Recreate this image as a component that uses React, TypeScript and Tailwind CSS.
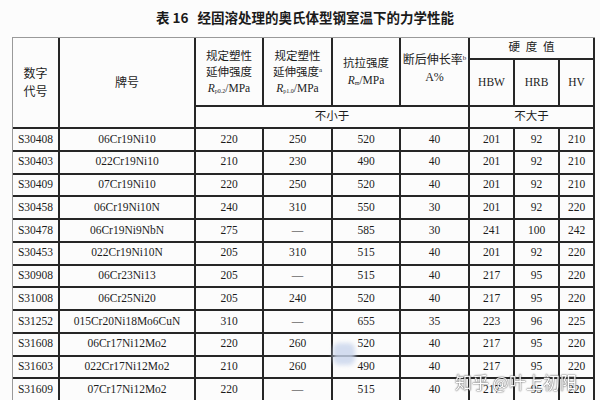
import React from "react";

const rows: string[][] = [
  ["S30408", "06Cr19Ni10", "220", "250", "520", "40", "201", "92", "210"],
  ["S30403", "022Cr19Ni10", "210", "230", "490", "40", "201", "92", "210"],
  ["S30409", "07Cr19Ni10", "220", "250", "520", "40", "201", "92", "210"],
  ["S30458", "06Cr19Ni10N", "240", "310", "550", "30", "201", "92", "220"],
  ["S30478", "06Cr19Ni9NbN", "275", "—", "585", "30", "241", "100", "242"],
  ["S30453", "022Cr19Ni10N", "205", "310", "515", "40", "201", "92", "220"],
  ["S30908", "06Cr23Ni13", "205", "—", "515", "40", "217", "95", "220"],
  ["S31008", "06Cr25Ni20", "205", "240", "520", "40", "217", "95", "220"],
  ["S31252", "015Cr20Ni18Mo6CuN", "310", "—", "655", "35", "223", "96", "225"],
  ["S31608", "06Cr17Ni12Mo2", "220", "260", "520", "40", "217", "95", "220"],
  ["S31603", "022Cr17Ni12Mo2", "210", "260", "490", "40", "217", "95", "220"],
  ["S31609", "07Cr17Ni12Mo2", "220", "—", "515", "40", "217", "95", "220"],
];

const cell =
  "flex items-center justify-center text-center border-r-2 border-b-2 border-[#262626]";

export default function App() {
  return (
    <div className="relative w-[600px] h-[400px] overflow-hidden bg-[#fcfcfc] text-[#1c1c1c] font-['Liberation_Serif','Noto_Sans_CJK_SC',serif]">
      <div className="h-[37px] flex items-center justify-center pl-[10px] pb-[2px]">
        <span className="whitespace-pre font-bold text-[13.5px] text-[#1a1a1a] font-['Noto_Sans_CJK_SC',sans-serif]">
          {"表 16   经固溶处理的奥氏体型钢室温下的力学性能"}
        </span>
      </div>
      <div className="ml-[12px] w-fit grid grid-cols-[47px_136px_68px_69px_68px_69px_45px_45px_35px] grid-rows-[22px_47px_22px_repeat(12,22.75px)] border-t border-l border-[#9a9a9a] text-[11px] leading-none">
        <div className={`${cell} col-start-1 row-start-1 row-span-3 flex-col text-[12px] leading-[18px]`}>
          <span>数字</span>
          <span>代号</span>
        </div>
        <div className={`${cell} col-start-2 row-start-1 row-span-3 text-[12px]`}>牌号</div>
        <div className={`${cell} col-start-3 row-start-1 row-span-2 flex-col text-[11.5px] leading-[16px]`}>
          <span>规定塑性</span>
          <span>延伸强度</span>
          <span>
            <span className="italic">R</span>
            <sub className="text-[6px]">p0.2</sub>/MPa
          </span>
        </div>
        <div className={`${cell} col-start-4 row-start-1 row-span-2 flex-col text-[11.5px] leading-[16px]`}>
          <span>规定塑性</span>
          <span>
            延伸强度<sup className="text-[7px]">a</sup>
          </span>
          <span>
            <span className="italic">R</span>
            <sub className="text-[6px]">p1.0</sub>/MPa
          </span>
        </div>
        <div className={`${cell} col-start-5 row-start-1 row-span-2 flex-col text-[11.5px] leading-[17px]`}>
          <span>抗拉强度</span>
          <span>
            <span className="italic">R</span>
            <sub className="text-[6px]">m</sub>/MPa
          </span>
        </div>
        <div className={`${cell} col-start-6 row-start-1 row-span-2 flex-col text-[12px] leading-[17px] pb-[6px]`}>
          <span className="whitespace-nowrap">
            断后伸长率<sup className="text-[7px]">b</sup>
          </span>
          <span>A%</span>
        </div>
        <div className={`${cell} col-start-7 col-span-3 row-start-1 text-[11.5px] whitespace-pre`}>
          {"硬  度  值"}
        </div>
        <div className={`${cell} col-start-7 row-start-2 text-[11.5px]`}>HBW</div>
        <div className={`${cell} col-start-8 row-start-2 text-[11.5px]`}>HRB</div>
        <div className={`${cell} col-start-9 row-start-2 text-[11.5px]`}>HV</div>
        <div className={`${cell} col-start-3 col-span-4 row-start-3 text-[11.5px]`}>不小于</div>
        <div className={`${cell} col-start-7 col-span-3 row-start-3 text-[11.5px]`}>不大于</div>
        {rows.map((r, i) =>
          r.map((v, j) => (
            <div key={`${i}-${j}`} className={`${cell} text-[11.5px]`}>
              {v}
            </div>
          ))
        )}
      </div>
      <div className="absolute left-[333px] top-[343px] w-[22px] h-[22px] rounded-[6px] bg-[#c9d5ec] blur-[2px] opacity-80" />
      <div className="absolute left-[455px] top-[373px] text-[17px] leading-none text-white opacity-90 whitespace-pre font-['Noto_Sans_CJK_SC',sans-serif] [text-shadow:0_0_1px_#333,0_0_2px_#555]">
        {"知乎 @叶上初阳"}
      </div>
    </div>
  );
}
